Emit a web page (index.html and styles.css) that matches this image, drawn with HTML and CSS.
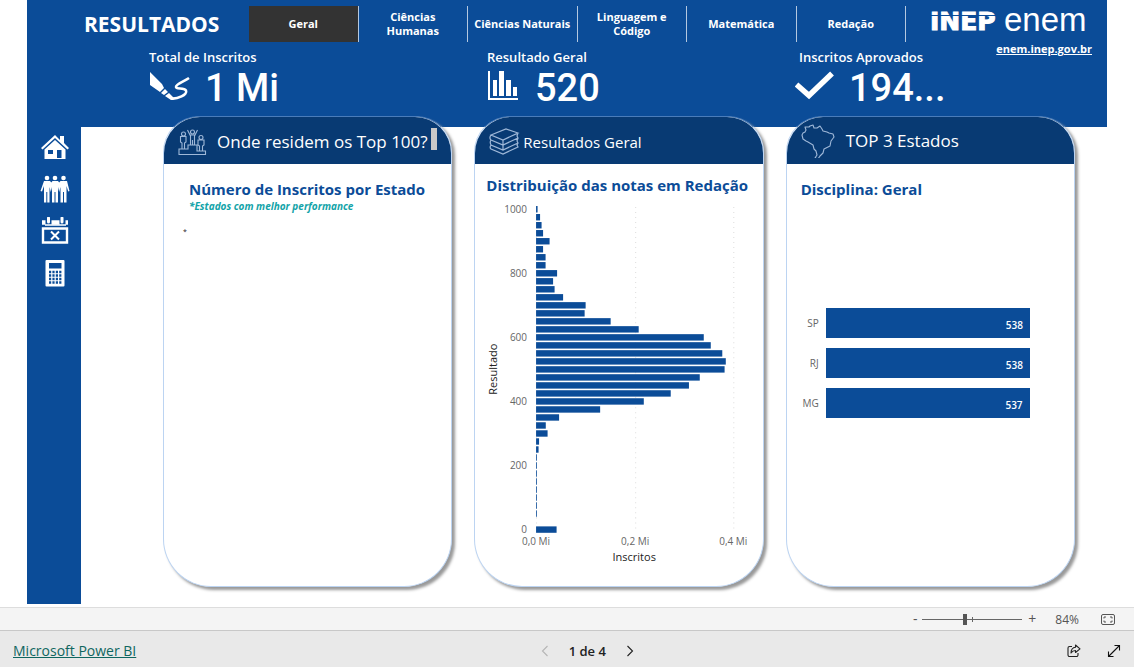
FILE: index.html
```html
<!DOCTYPE html>
<html lang="pt-BR">
<head>
<meta charset="utf-8">
<meta name="viewport" content="width=device-width, initial-scale=1">
<title>Resultados ENEM</title>
<link rel="stylesheet" href="styles.css">
</head>
<body>
<main class="report">
  <header class="banner">
    <div class="topbar">
      <h1 class="title">RESULTADOS</h1>
      <nav class="tabs">
        <button class="tab active">Geral</button>
        <button class="tab">Ciências Humanas</button>
        <button class="tab">Ciências Naturais</button>
        <button class="tab">Linguagem e Código</button>
        <button class="tab">Matemática</button>
        <button class="tab">Redação</button>
      </nav>
      <div class="brand">
        <svg class="logos" width="160" height="38" viewBox="0 -5 160 38">
          <text class="logo-inep" x="0" y="24">INEP</text>
          <path class="logo-cut" d="M0 9.500H66"/>
          <text class="logo-enem" x="74" y="25">enem</text>
        </svg>
        <a class="site" href="#">enem.inep.gov.br</a>
      </div>
    </div>
    <section class="kpis">
      <div class="kpi">
        <h2 class="kpi-label">Total de Inscritos</h2>
        <div class="kpi-row">
          <svg class="kpi-icon" width="42" height="30" viewBox="0 0 42 30" fill="#fff"><path d="M1 1 13 13l2 4-4 4L1 14zM12 22l4-4 3 3-4 3zM16 25l4-3 5 5-3 2z"/><path d="M22 27.500c6 1 17-4 15-8-2-3-10-1-10-3.500C27 13 34 11 40 7" fill="none" stroke="#fff" stroke-width="2.600"/></svg>
          <span class="kpi-value">1 Mi</span>
        </div>
      </div>
      <div class="kpi">
        <h2 class="kpi-label">Resultado Geral</h2>
        <div class="kpi-row">
          <svg class="kpi-icon" width="34" height="30" viewBox="0 0 34 30" fill="#fff"><path d="M1 0h2v27h28v2H1zM6 9h4v16H6zM12 0h5v25h-5zM19 9h5v16h-5zM26 16h4v9h-4z"/></svg>
          <span class="kpi-value">520</span>
        </div>
      </div>
      <div class="kpi">
        <h2 class="kpi-label">Inscritos Aprovados</h2>
        <div class="kpi-row check">
          <svg class="kpi-icon" width="40" height="30" viewBox="0 0 40 30"><path d="M1.500 13.500 14 24.500 37 2.500" fill="none" stroke="#fff" stroke-width="5.500"/></svg>
          <span class="kpi-value">194...</span>
        </div>
      </div>
    </section>
  </header>

  <div class="content">
    <aside class="sidebar">
      <button class="side" aria-label="Início"><svg width="30" height="28" viewBox="0 0 30 28" fill="#fff"><path d="M1 15 15 2l5 5V3h4v7l5 5-1.500 1.500L15 5 2.500 16.500z"/><path fill-rule="evenodd" d="M15 7 4.500 16.500V26h21v-9.500zM8 17h5v4H8zM17 17h4.500v8H17z"/></svg></button>
      <button class="side" aria-label="Participantes"><svg width="30" height="28" viewBox="0 0 30 28" fill="#fff"><circle cx="7" cy="3" r="2.300"/><circle cx="15" cy="3" r="2.300"/><circle cx="23.500" cy="3" r="2.300"/><path d="M4 6h6l1.300 1.500L12.500 6h5.500l1.200 1.500L20.500 6H27l2.500 10-1.300.500L26.500 11v16.500H24V17h-1v10.500h-2.500V12l-1.300 5L18 12v15.500h-2.500V17h-1v10.500H12V12l-1.200 5L9.500 12v15.500H7.300V17h-1v10.500H4V11l-2 5.500-1.500-.500z"/></svg></button>
      <button class="side" aria-label="Calendário"><svg width="30" height="28" viewBox="0 0 30 28" fill="none" stroke="#fff"><path d="M2 5.500h3.500m6 0h8m6 0H28" stroke-width="4.500"/><path d="M5 8h21" stroke-width="1.500"/><path d="M8.500 1v4M22 1v4" stroke-width="3" stroke-linecap="round"/><path d="M3 11.500h24v14H3z" stroke-width="2.400"/><path d="m11 14.500 8 8m0-8-8 8" stroke-width="2"/></svg></button>
      <button class="side" aria-label="Calculadora"><svg width="30" height="28" viewBox="0 0 30 28"><rect x="5.500" y="1" width="19" height="26.500" rx="1" fill="#fff"/><path d="M9 4h12.500v5.500H9z" fill="#0b4c98"/><path d="M9 13h12.500M9 16.500h12.500M9 20h12.500M9 23.500h12.500" stroke="#0b4c98" stroke-width="2.300" stroke-dasharray="2.200 1.200"/></svg></button>
    </aside>

    <div class="cards">
      <article class="card">
        <header class="card-head">
          <svg class="head-icon" width="29" height="30" viewBox="0 0 29 30" fill="none" stroke="#9fb8d8" stroke-width="1.100"><path d="M1 27.500v-5.500h9v-4h9v6h8.500v3.500zM4 22v-6l-1.500-1V9.500H8V15l-1.500 1v6M12.500 18V9L9.500 3M16.500 18V9l3-6M12.500 8h4M14.500 13v5M21.500 24v-5l-1.500-1v-5h6v5l-1.500 1v5"/><circle cx="5.500" cy="7" r="2"/><circle cx="14.500" cy="5" r="2"/><circle cx="23" cy="10.500" r="2"/></svg>
          <h2 class="head-title">Onde residem os Top 100?</h2>
          <span class="caret"></span>
        </header>
        <div class="card-body">
          <h3 class="subtitle">Número de Inscritos por Estado</h3>
          <p class="note">*Estados com melhor performance</p>
          <p class="dot">*</p>
        </div>
      </article>

      <article class="card">
        <header class="card-head books">
          <svg class="head-icon" width="32" height="30" viewBox="0 0 32 30" fill="none" stroke="#9fb8d8" stroke-width="1.200"><path d="M2 8 17 2l12 4-15 7zM2 8c-1.500 2-1 4 0 5l12 5 15-7-1-2 1-3M14 13v5M2 13c-1.500 2-1 3 0 5l12 5 15-7-1-2 1-3M14 18v5M2 18c-1.500 2-1 3 0 4l12 5 15-7-1-2 1-2"/></svg>
          <h2 class="head-title small">Resultados Geral</h2>
        </header>
        <div class="card-body chart">
          <h3 class="subtitle">Distribuição das notas em Redação</h3>
          <svg class="histogram" viewBox="0 0 276 370" role="img" aria-label="Distribuição das notas em Redação">
            <path class="grid" d="M56.500 7v324M155.500 7v324M253.500 7v324"/>
            <g class="bars">
              <rect x="56" y="6" width="1.500" height="6.400"/>
              <rect x="56" y="14" width="4" height="6.400"/>
              <rect x="56" y="22" width="5.500" height="6.400"/>
              <rect x="56" y="30" width="7" height="6.400"/>
              <rect x="56" y="38" width="13.500" height="6.400"/>
              <rect x="56" y="46" width="7" height="6.400"/>
              <rect x="56" y="54" width="9.500" height="6.400"/>
              <rect x="56" y="62" width="9.500" height="6.400"/>
              <rect x="56" y="70" width="21" height="6.400"/>
              <rect x="56" y="78" width="17" height="6.400"/>
              <rect x="56" y="86" width="18.500" height="6.400"/>
              <rect x="56" y="94" width="27" height="6.400"/>
              <rect x="56" y="102" width="49.500" height="6.400"/>
              <rect x="56" y="110" width="48.500" height="6.400"/>
              <rect x="56" y="118" width="74.500" height="6.400"/>
              <rect x="56" y="126" width="102.500" height="6.400"/>
              <rect x="56" y="134" width="167.500" height="6.400"/>
              <rect x="56" y="142" width="174.500" height="6.400"/>
              <rect x="56" y="150" width="186" height="6.400"/>
              <rect x="56" y="158" width="189.500" height="6.400"/>
              <rect x="56" y="166" width="188.300" height="6.400"/>
              <rect x="56" y="174" width="163.500" height="6.400"/>
              <rect x="56" y="182" width="152.700" height="6.400"/>
              <rect x="56" y="190" width="134.500" height="6.400"/>
              <rect x="56" y="198" width="107.600" height="6.400"/>
              <rect x="56" y="206" width="64" height="6.400"/>
              <rect x="56" y="214" width="23" height="6.400"/>
              <rect x="56" y="222" width="9.700" height="6.400"/>
              <rect x="56" y="230" width="11.500" height="6.400"/>
              <rect x="56" y="238" width="3" height="6.400"/>
              <rect x="56" y="246" width="2.500" height="6.400"/>
              <rect x="56" y="254" width="0.800" height="6.400"/>
              <rect x="56" y="262" width="0.800" height="6.400"/>
              <rect x="56" y="270" width="0.800" height="6.400"/>
              <rect x="56" y="278" width="0.800" height="6.400"/>
              <rect x="56" y="286" width="0.800" height="6.400"/>
              <rect x="56" y="294" width="0.800" height="6.400"/>
              <rect x="56" y="302" width="0.800" height="6.400"/>
              <rect x="56" y="310" width="0.800" height="6.400"/>
              <rect x="56" y="326" width="20.500" height="6.400"/>
            </g>
            <g class="ticks end">
              <text x="47" y="13">1000</text><text x="47" y="77">800</text><text x="47" y="141">600</text>
              <text x="47" y="205">400</text><text x="47" y="269">200</text><text x="47" y="333">0</text>
            </g>
            <g class="ticks mid">
              <text x="56" y="345">0,0 Mi</text><text x="155" y="345">0,2 Mi</text><text x="253" y="345">0,4 Mi</text>
            </g>
            <text class="axis" x="154" y="361">Inscritos</text>
            <text class="axis" transform="translate(17 169) rotate(-90)">Resultado</text>
          </svg>
        </div>
      </article>

      <article class="card">
        <header class="card-head brazil">
          <svg class="head-icon" width="34" height="34" viewBox="0 0 34 34" fill="none" stroke="#9fb8d8" stroke-width="1.100" stroke-linejoin="round"><path d="m1 11 1-2 2-1 1-2-1-3 4 0 1-1 3-1 1 3 3 0 3-2 2 3 1 2 4 1 2 1 4 1 1 3-3 4-1 5-4 2-2 1-1 4-3 3-2 3-3-1 2-3-1-4-2-2-1-4-5-3-2-1-3-2z"/></svg>
          <h2 class="head-title">TOP 3 Estados</h2>
        </header>
        <div class="card-body top3">
          <h3 class="subtitle">Disciplina: Geral</h3>
          <div class="ranking">
            <span class="uf">SP</span><div class="track"><div class="bar" style="width:100%">538</div></div>
            <span class="uf">RJ</span><div class="track"><div class="bar" style="width:100%">538</div></div>
            <span class="uf">MG</span><div class="track"><div class="bar" style="width:99.8%">537</div></div>
          </div>
        </div>
      </article>
    </div>
  </div>
</main>

<div class="zoombar">
  <button class="zoom-step" aria-label="Reduzir">-</button>
  <input class="zoom-range" type="range" min="0" max="100" value="42" aria-label="Zoom">
  <button class="zoom-step" aria-label="Ampliar">+</button>
  <span class="zoom-value">84%</span>
  <button class="icon-btn" aria-label="Ajustar à página"><svg width="14" height="11" viewBox="0 0 14 11" fill="none" stroke="#555"><rect x=".5" y=".5" width="13" height="10" rx="1.500"/><path d="M5 3H3v1.500M3 6.500V8h2M9 3h2v1.500M11 6.500V8H9"/></svg></button>
</div>

<footer class="footer">
  <a class="powerbi" href="#">Microsoft Power BI</a>
  <div class="pager">
    <button class="icon-btn" aria-label="Página anterior" disabled><svg width="8" height="12" viewBox="0 0 8 12" fill="none" stroke="#b5b5b5" stroke-width="1.100"><path d="M6.500 1 1.500 6l5 5"/></svg></button>
    <span class="page">1 de 4</span>
    <button class="icon-btn" aria-label="Próxima página"><svg width="8" height="12" viewBox="0 0 8 12" fill="none" stroke="#222" stroke-width="1.100"><path d="m1.500 1 5 5-5 5"/></svg></button>
  </div>
  <div class="actions">
    <button class="icon-btn" aria-label="Compartilhar"><svg width="14" height="14" viewBox="0 0 14 14" fill="none" stroke="#222" stroke-width="1.100"><path d="M5 2.500H2.500a1.500 1.500 0 0 0-1.500 1.500v7A1.500 1.500 0 0 0 2.500 12.500h7A1.500 1.500 0 0 0 11 11V9"/><path d="M8.500 1 13 4.800 8.500 8.500v-2C6 6.500 5 7.500 4 9c0-3.500 2-5.500 4.500-5.800z" stroke-linejoin="round"/></svg></button>
    <button class="icon-btn" aria-label="Tela inteira"><svg width="14" height="14" viewBox="0 0 14 14" fill="none" stroke="#111" stroke-width="1.100"><path d="M1.500 12.500 12.500 1.500M7.500 1.500h5v5M1.500 7.500v5h5"/></svg></button>
  </div>
</footer>
</body>
</html>
```
FILE: styles.css
```css
* { box-sizing: border-box; }
body {
  margin: 0;
  min-height: 100vh;
  display: flex;
  flex-direction: column;
  background: #fff;
  font-family: "Open Sans", "Noto Sans", sans-serif;
  color: #222;
}
h1, h2, h3, p { margin: 0; }
button {
  padding: 0;
  border: 0;
  background: none;
  font-family: inherit;
  color: inherit;
  cursor: pointer;
}
svg { display: block; flex: none; }

.report {
  flex: 1;
  display: flex;
  flex-direction: column;
  margin: 0 27px;
  padding-bottom: 3px;
}

.banner {
  height: 127px;
  background: #0b4c98;
  color: #fff;
}
.topbar {
  display: flex;
  align-items: flex-start;
  height: 48px;
  padding: 6px 15px 0 57px;
}
.title {
  width: 165px;
  font-size: 21px;
  line-height: 36px;
  font-weight: 700;
}
.tabs {
  flex: 0 1 657px;
  display: grid;
  grid-template-columns: repeat(6, minmax(0, 1fr));
}
.tab {
  height: 36px;
  padding: 0 5px;
  border-right: 1px solid #b4c8e0;
  font-size: 11px;
  line-height: 14px;
  font-weight: 700;
}
.tab.active { background: #333; }
.brand {
  flex: 1;
  display: flex;
  flex-direction: column;
  align-items: flex-end;
  gap: 3px;
  margin-top: -5px;
}
.logos { margin-right: 2px; }
.logo-inep {
  font: 700 25px "DejaVu Sans", sans-serif;
  fill: #fff;
  stroke: #fff;
}
.logo-cut { stroke: #0b4c98; }
.logo-enem {
  font: 33px "Liberation Sans", sans-serif;
  fill: #fff;
}
.site {
  color: #fff;
  font-size: 11px;
  line-height: 14px;
  font-weight: 700;
}
.kpis {
  display: grid;
  grid-template-columns: 338fr 312fr 308fr;
  padding-left: 122px;
}
.kpi-label {
  font-size: 13px;
  line-height: 18px;
  font-weight: 600;
}
.kpi-row {
  display: flex;
  align-items: flex-start;
  gap: 14px;
}
.kpi-row.check { margin-left: -4px; }
.kpi-icon { margin-top: 5px; }
.kpi-value {
  font-family: Roboto, sans-serif;
  font-size: 38px;
  line-height: 44px;
  font-weight: 500;
}

.content { flex: 1; display: flex; }
.sidebar {
  width: 54px;
  display: flex;
  flex-direction: column;
  align-items: center;
  gap: 14px;
  padding: 6px 0 0 2px;
  background: #0b4c98;
}
.cards {
  flex: 1;
  display: grid;
  grid-template-columns: repeat(3, minmax(0, 1fr));
  gap: 22px;
  margin-top: -11px;
  padding: 0 32px 17px 82px;
}
.card {
  display: flex;
  flex-direction: column;
  border: 1px solid #bcd4f2;
  border-top-color: #4a7cba;
  border-radius: 36px 36px 48px 48px;
  background: #fff;
  box-shadow: 3px 3px 3px #999;
}
.card-head {
  display: flex;
  align-items: center;
  gap: 10px;
  height: 47px;
  padding: 3px 14px 0;
  border-radius: 36px 36px 0 0;
  background: #083a73;
  color: #fff;
}
.card-head.books { gap: 2px; }
.card-head.brazil { gap: 11px; padding-bottom: 2px; }
.head-title {
  font-size: 17px;
  line-height: 24px;
  font-weight: 400;
  white-space: nowrap;
}
.head-title.small { font-size: 15px; }
.caret {
  width: 7px;
  height: 22px;
  margin: -6px 0 0 -7px;
  background: #c8c8c8;
}
.card-body { flex: 1; padding: 14px 6px 0 25px; }
.card-body.chart { padding: 10px 6px 0 5px; }
.card-body.top3 { padding: 14px 44px 0 0; }
.subtitle {
  font-size: 15px;
  line-height: 22px;
  font-weight: 700;
  color: #0b4c98;
  white-space: nowrap;
}
.chart .subtitle { padding-left: 6px; }
.top3 .subtitle { padding-left: 14px; }
.note {
  font-size: 10px;
  line-height: 12px;
  font-weight: 700;
  font-style: italic;
  color: #12a3a8;
}
.dot {
  margin: 14px 0 0 -6px;
  font-size: 7px;
  line-height: 12px;
}
.histogram { width: 100%; height: auto; margin-top: 4px; }
.grid { stroke: #dcdcdc; stroke-dasharray: 1 4; fill: none; }
.bars { fill: #0b4c98; }
.ticks { font-size: 10px; fill: #666; }
.end { text-anchor: end; }
.mid, .axis { text-anchor: middle; }
.axis { font-size: 11px; fill: #222; }
.ranking {
  display: grid;
  grid-template-columns: 32px 1fr;
  gap: 10px 7px;
  margin-top: 108px;
}
.uf {
  font-size: 10px;
  line-height: 30px;
  text-align: right;
  color: #666;
}
.bar {
  height: 30px;
  padding: 2px 7px 0 0;
  background: #0b4c98;
  color: #fff;
  font-size: 10px;
  line-height: 30px;
  font-weight: 600;
  text-align: right;
}

.zoombar {
  display: flex;
  align-items: center;
  justify-content: flex-end;
  height: 23px;
  padding-right: 19px;
  border-top: 1px solid #ddd;
  background: #f4f4f4;
  color: #555;
}
.zoom-step { width: 14px; font-size: 14px; line-height: 20px; }
.zoom-range {
  appearance: none;
  width: 100px;
  height: 11px;
  margin: 0 3px 0 0;
  background:
    linear-gradient(#666, #666) 50px 50% / 1px 5px no-repeat,
    linear-gradient(#666, #666) 0 50% / 100% 1px no-repeat;
}
.zoom-range::-webkit-slider-thumb {
  appearance: none;
  width: 4px;
  height: 11px;
  background: #555;
}
.zoom-value { margin: 0 22px 0 16px; font-size: 12px; }
.footer {
  display: grid;
  grid-template-columns: 13fr auto 12fr;
  align-items: center;
  height: 37px;
  padding: 3px 13px 0;
  border-top: 1px solid #c8c8c8;
  background: #e9e9e9;
}
.powerbi { justify-self: start; font-size: 14px; color: #0f6660; }
.pager { display: flex; align-items: center; gap: 20px; }
.page { font-size: 13px; line-height: 18px; font-weight: 600; }
.actions { display: flex; justify-content: flex-end; gap: 26px; }
```
